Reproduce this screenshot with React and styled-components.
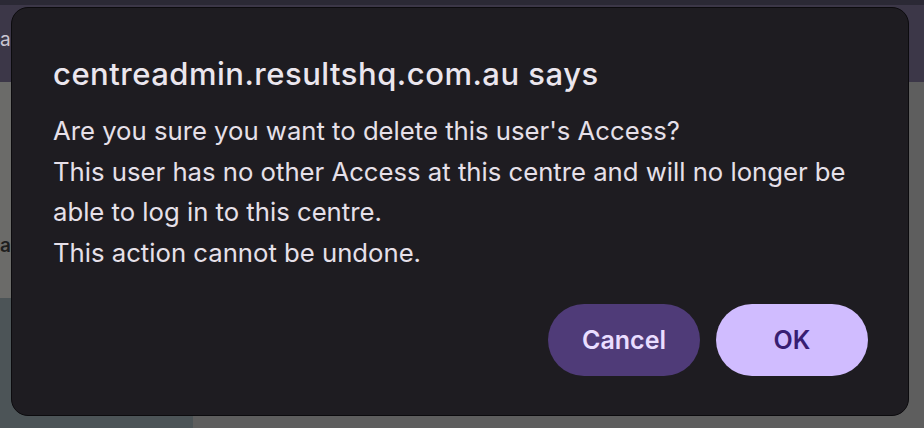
import styled, { createGlobalStyle } from "styled-components";

const GlobalStyle = createGlobalStyle`
  html, body {
    margin: 0;
    padding: 0;
    background: #5e5e5e;
    font-family: Inter, "Noto Sans", sans-serif;
    overflow: hidden;
  }
`;

const Page = styled.div`
  position: relative;
  width: 924px;
  height: 428px;
  display: flex;
  flex-direction: column;
  background: #5e5e5e;
`;

const TopStrip = styled.div`
  height: 5px;
  background: #2b2935;
`;

const Header = styled.header`
  height: 77px;
  background: #3c3748;
  display: flex;
  align-items: center;
`;

const HeaderText = styled.span`
  font-size: 19px;
  color: #c9c5d2;
  margin-top: -8px;
`;

const Body = styled.div`
  flex: 1;
  display: flex;
`;

const Sidebar = styled.aside`
  width: 193px;
  display: flex;
  flex-direction: column;
`;

const SideTop = styled.div`
  height: 216px;
  background: #6b6b69;
  display: flex;
  align-items: center;
`;

const SideText = styled.span`
  font-size: 19px;
  font-weight: 600;
  color: #1e1e1e;
  margin-top: 110px;
`;

const SideBottom = styled.div`
  flex: 1;
  background: #4c5457;
`;

const Overlay = styled.div`
  position: absolute;
  inset: 0;
  padding: 7px 0 0 11px;
`;

const Dialog = styled.div`
  box-sizing: border-box;
  width: 898px;
  height: 409px;
  background: #1e1c21;
  border: 1px solid #0c0b0e;
  border-radius: 17px;
  padding: 47px 40px 39px 41px;
  display: flex;
  flex-direction: column;
  color: #e6e0e9;
`;

const Title = styled.h1`
  margin: 0;
  font-size: 31px;
  font-weight: 500;
  line-height: 38px;
  letter-spacing: 0.5px;
  color: #ebe6ee;
`;

const Message = styled.div`
  margin-top: 18px;
  font-size: 25.7px;
  line-height: 40.5px;
  color: #e6e0e9;
`;

const Actions = styled.div`
  margin-top: auto;
  display: flex;
  justify-content: flex-end;
  gap: 16px;
`;

const Button = styled.button`
  width: 152px;
  height: 72px;
  border: none;
  border-radius: 36px;
  font-family: inherit;
  font-size: 25px;
  font-weight: 600;
  background: ${({ $primary }) => ($primary ? "#d0bcff" : "#4f3b78")};
  color: ${({ $primary }) => ($primary ? "#381e72" : "#eaddff")};
`;

const App = () => {
  return (
    <>
      <GlobalStyle />
      <Page>
        <TopStrip />
        <Header>
          <HeaderText>al</HeaderText>
        </Header>
        <Body>
          <Sidebar>
            <SideTop>
              <SideText>a</SideText>
            </SideTop>
            <SideBottom />
          </Sidebar>
        </Body>
        <Overlay>
          <Dialog role="alertdialog">
            <Title>centreadmin.resultshq.com.au says</Title>
            <Message>
              Are you sure you want to delete this user's Access?
              <br />
              This user has no other Access at this centre and will no longer be
              able to log in to this centre.
              <br />
              This action cannot be undone.
            </Message>
            <Actions>
              <Button>Cancel</Button>
              <Button $primary>OK</Button>
            </Actions>
          </Dialog>
        </Overlay>
      </Page>
    </>
  );
};

export default App;
